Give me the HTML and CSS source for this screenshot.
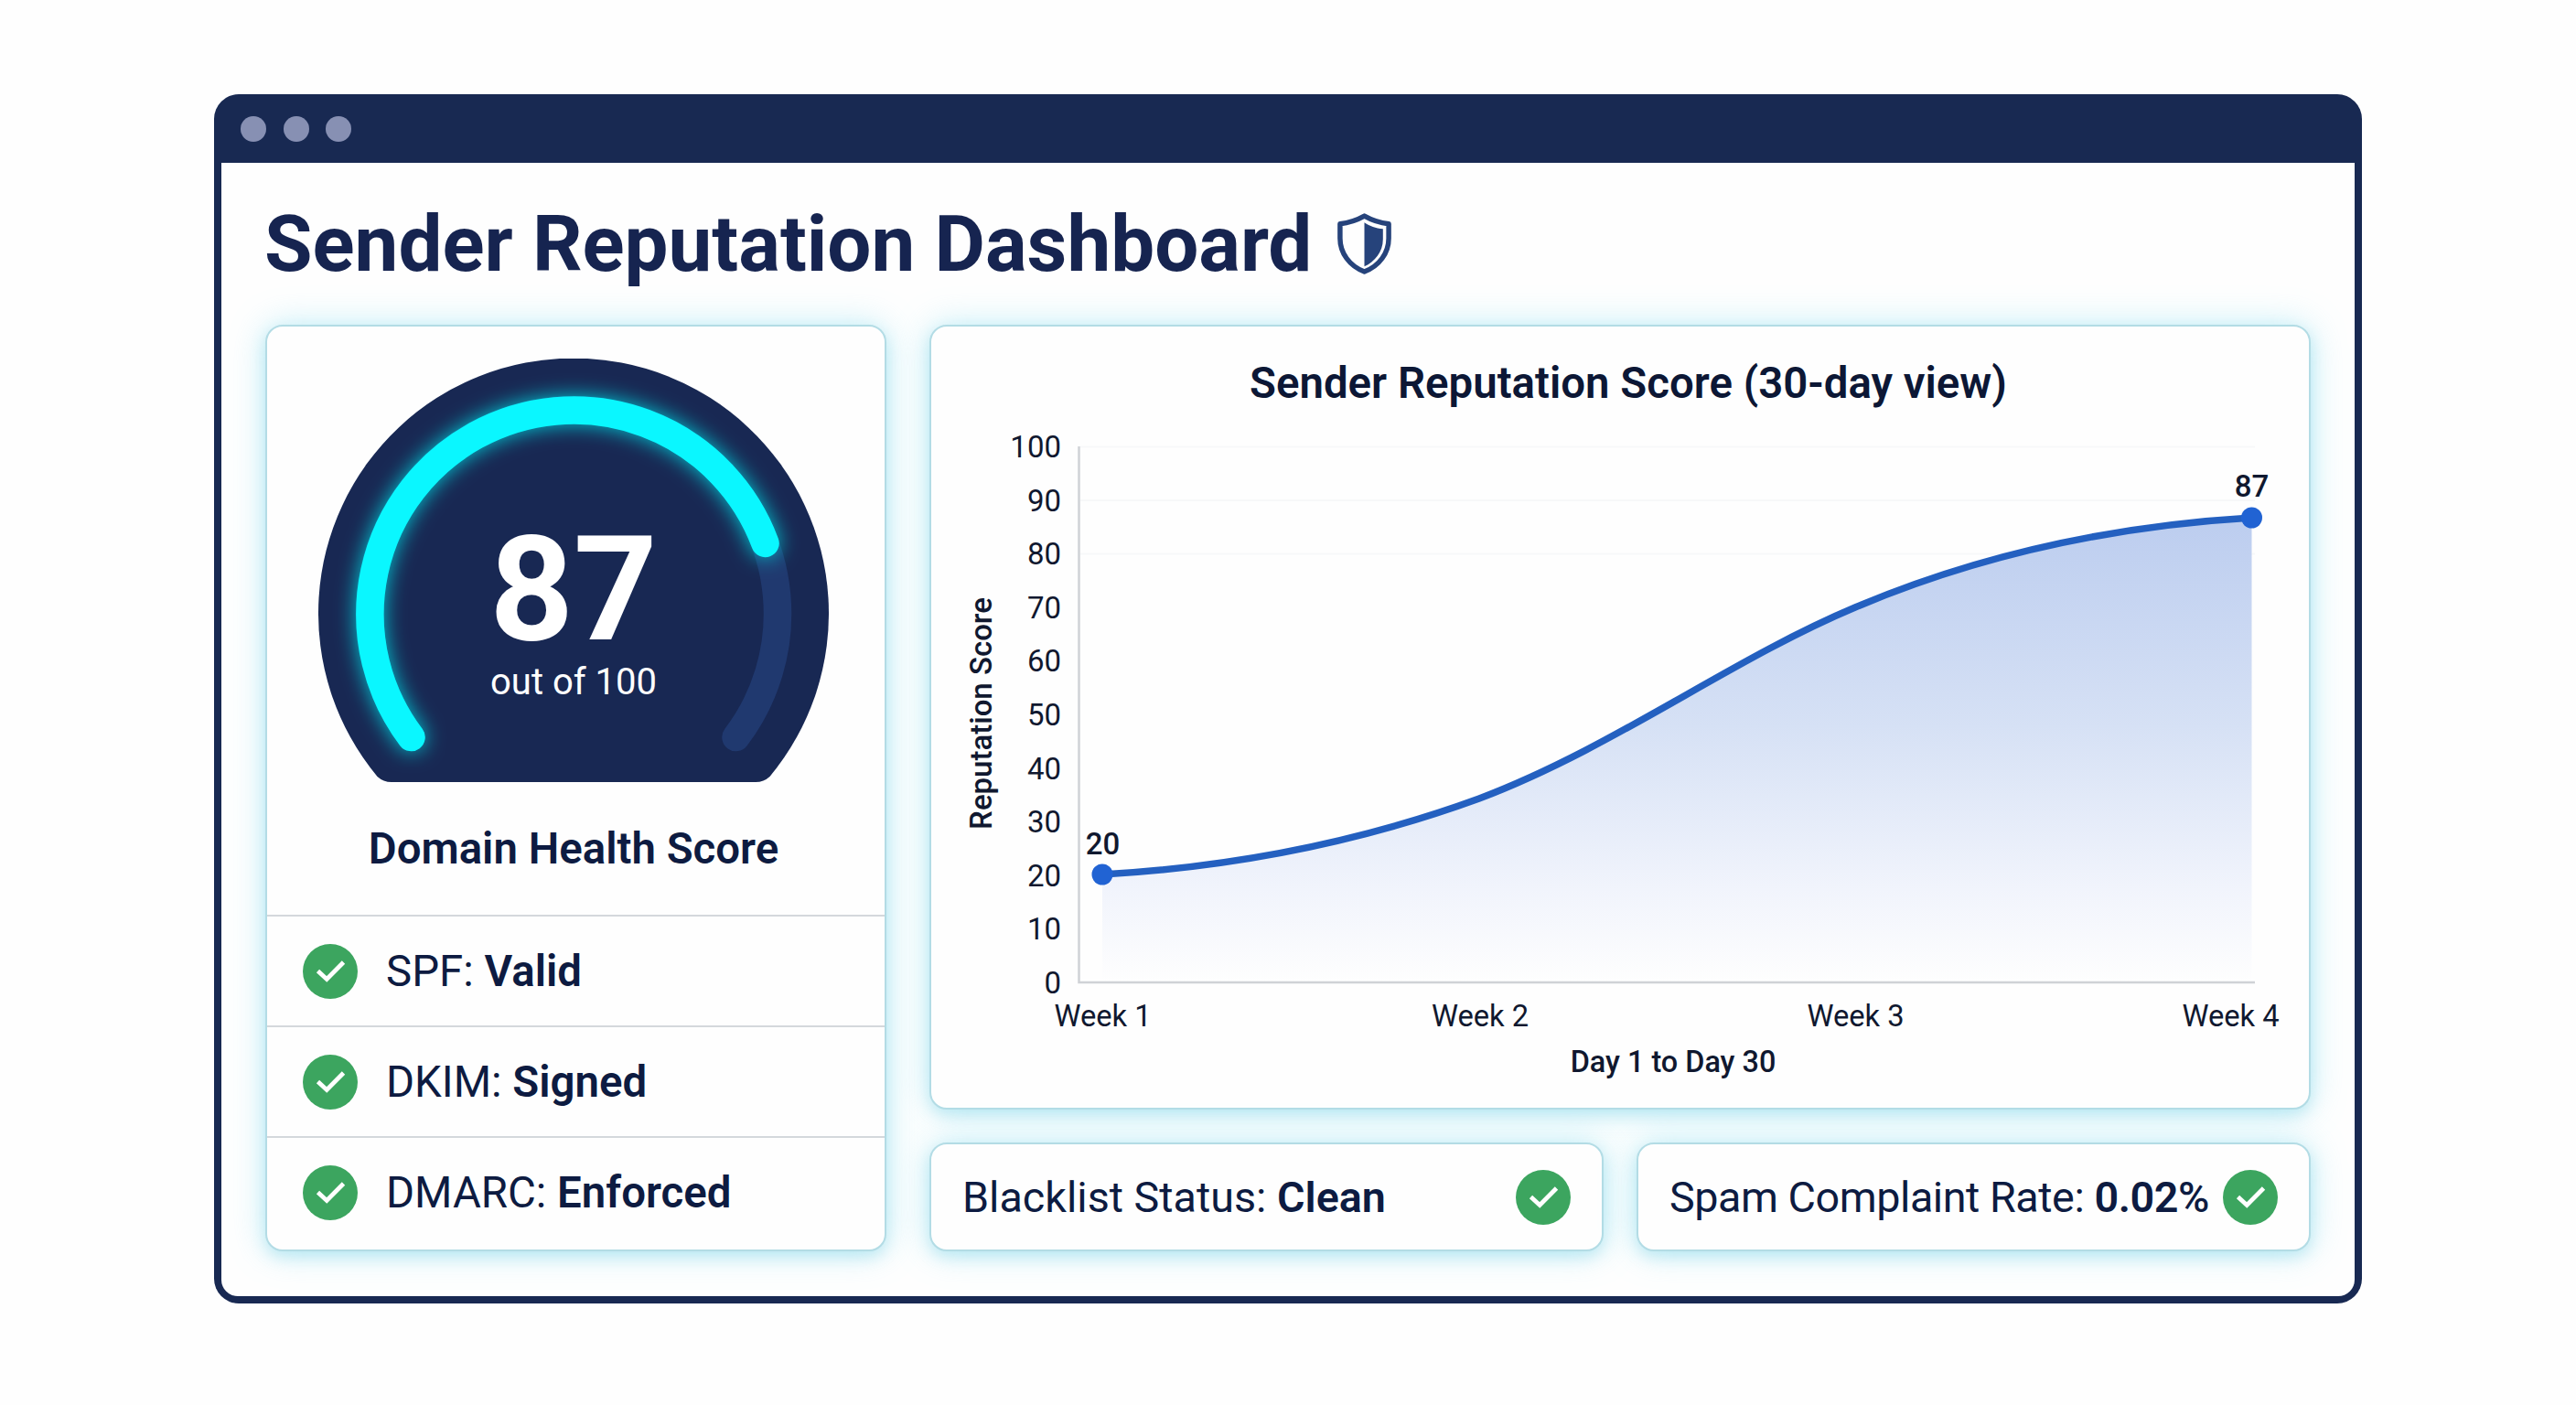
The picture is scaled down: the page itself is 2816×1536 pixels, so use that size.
FILE: index.html
```
<!DOCTYPE html>
<html lang="en">
<head>
    <meta charset="UTF-8">
    <title>Sender Reputation Dashboard</title>
    <link rel="stylesheet" href="styles.css">
</head>
<body>

<svg class="sprite" aria-hidden="true">
    <symbol id="check" viewBox="0 0 60 60">
        <circle cx="30" cy="30" r="30" fill="#3ca55f"/>
        <path d="M16.5 29.500 L26.200 38.500 L44.500 20" fill="none" stroke="#fff" stroke-width="4.800"/>
    </symbol>
</svg>

<div class="window">
    <div class="titlebar">
        <span class="dot"></span>
        <span class="dot"></span>
        <span class="dot"></span>
    </div>

    <div class="content">
        <div class="header">
            <h1 class="header-title">Sender Reputation Dashboard</h1>
            <svg class="shield" viewBox="0 0 58 66">
                <path d="M29 3 C21 7.500 12 10.500 2.800 11.500 V27 C2.800 43 13 57 29 63 C45 57 55.200 43 55.200 27 V11.500 C46 10.500 37 7.500 29 3 Z" fill="none" stroke="#26437b" stroke-width="5.400" stroke-linejoin="round"/>
                <path d="M29 10 C35 14 41 16 49 17 V28 C49 42 40 52 29 57.500 Z" fill="#26437b"/>
            </svg>
        </div>

        <div class="board">
            <div class="card health">
                <div class="health-top">
                    <svg class="gauge" viewBox="0 0 558 463">
                        <defs>
                            <filter id="glow" x="-20%" y="-20%" width="140%" height="140%">
                                <feGaussianBlur stdDeviation="11"/>
                            </filter>
                        </defs>
                        <path class="gauge-body" d="M64.500 457 A279 279 0 1 1 493.500 457 Q487 463 478 463 H80 Q71 463 64.500 457 Z"/>
                        <path class="gauge-track" d="M101.500 414 A223 223 0 1 1 456.500 414"/>
                        <path class="gauge-glow" filter="url(#glow)" d="M101.500 414 A223 223 0 1 1 488.500 202"/>
                        <path class="gauge-value" d="M101.500 414 A223 223 0 1 1 488.500 202"/>
                        <text class="gauge-number" x="279" y="307">87</text>
                        <text class="gauge-note" x="279" y="367">out of 100</text>
                    </svg>
                    <h2 class="health-title">Domain Health Score</h2>
                </div>
                <ul class="checks">
                    <li><svg class="check"><use href="#check"/></svg><span>SPF: <b>Valid</b></span></li>
                    <li><svg class="check"><use href="#check"/></svg><span>DKIM: <b>Signed</b></span></li>
                    <li><svg class="check"><use href="#check"/></svg><span>DMARC: <b>Enforced</b></span></li>
                </ul>
            </div>

            <div class="main">
                <div class="card chart-card">
                    <h2 class="chart-title">Sender Reputation Score (30-day view)</h2>
                    <svg class="chart" viewBox="1018 460 1506 750">
                        <defs>
                            <linearGradient id="area" x1="0" y1="566" x2="0" y2="1074" gradientUnits="userSpaceOnUse">
                                <stop offset="0" stop-color="#bccdef"/>
                                <stop offset="0.45" stop-color="#d6e1f5"/>
                                <stop offset="0.8" stop-color="#f1f4fc"/>
                                <stop offset="1" stop-color="#fefefe"/>
                            </linearGradient>
                        </defs>
                        <path class="grid" d="M1181 488.500 H2465 M1181 547 H2465 M1181 605.500 H2465"/>
                        <path fill="url(#area)" d="M1205 956 C1345 948 1480 923 1617 873 C1765 817 1890 722 2028 664 C2165 606 2310 575 2461.500 566 V1074 H1205 Z"/>
                        <path class="axis" d="M1179.500 488 V1074 H2465"/>
                        <path class="line" d="M1205 956 C1345 948 1480 923 1617 873 C1765 817 1890 722 2028 664 C2165 606 2310 575 2461.500 566"/>
                        <circle class="point" cx="1205" cy="956" r="11.500"/>
                        <circle class="point" cx="2461.500" cy="566" r="11.500"/>
                        <g class="ticks-y">
                            <text x="1160" y="500">100</text>
                            <text x="1160" y="558.500">90</text>
                            <text x="1160" y="617">80</text>
                            <text x="1160" y="675.500">70</text>
                            <text x="1160" y="734">60</text>
                            <text x="1160" y="793">50</text>
                            <text x="1160" y="851.500">40</text>
                            <text x="1160" y="910">30</text>
                            <text x="1160" y="968.500">20</text>
                            <text x="1160" y="1027">10</text>
                            <text x="1160" y="1086">0</text>
                        </g>
                        <g class="ticks-x">
                            <text x="1205.500" y="1122">Week 1</text>
                            <text x="1618" y="1122">Week 2</text>
                            <text x="2028.500" y="1122">Week 3</text>
                            <text x="2438.500" y="1122">Week 4</text>
                        </g>
                        <g class="labels">
                            <text x="1205.500" y="934">20</text>
                            <text x="2461.500" y="543">87</text>
                            <text class="range" x="1829" y="1171.500">Day 1 to Day 30</text>
                            <text transform="translate(1084 780) rotate(-90)">Reputation Score</text>
                        </g>
                    </svg>
                </div>

                <div class="stats">
                    <div class="card stat">
                        <span>Blacklist Status: <b>Clean</b></span>
                        <svg class="check"><use href="#check"/></svg>
                    </div>
                    <div class="card stat stat-tight">
                        <span>Spam Complaint Rate: <b>0.02</b><span class="percent">%</span></span>
                        <svg class="check"><use href="#check"/></svg>
                    </div>
                </div>
            </div>
        </div>
    </div>
</div>

</body>
</html>
```
FILE: styles.css
```
* {
    box-sizing: border-box;
    margin: 0;
    padding: 0;
}

body {
    background-color: #fefefe;
    font-family: Roboto, sans-serif;
    color: #0d1b41;
    height: 1536px;
    padding: 103px 234px 111px;
}

.sprite {
    display: block;
    width: 0;
    height: 0;
}

.window {
    height: 1322px;
    display: flex;
    flex-direction: column;
    padding: 0 8px 8px;
    background: #182952;
    border-radius: 27px;
}

.titlebar {
    flex: none;
    height: 75px;
    padding-left: 21px;
    display: flex;
    align-items: center;
    gap: 18.500px;
}

.dot {
    width: 28px;
    height: 28px;
    border-radius: 50%;
    background: #8790b3;
}

.content {
    flex: 1;
    display: flex;
    flex-direction: column;
    padding: 0 48px 49px;
    background: #fefefe;
    border-radius: 0 0 18px 18px;
}

.header {
    flex: none;
    height: 177px;
    display: flex;
    align-items: center;
    gap: 28px;
}

.header-title {
    margin-left: -1px;
    font-size: 85.300px;
    font-weight: 700;
    line-height: 100px;
    color: #162450;
}

.shield {
    width: 59px;
    height: 67px;
}

.board {
    flex: 1;
    display: flex;
    gap: 47px;
}

.card {
    background: #fefefe;
    border: 2px solid #b3dce5;
    border-radius: 19px;
    box-shadow: 0 0 38px rgba(110, 218, 240, 0.4), 0 6px 16px rgba(90, 195, 220, 0.28);
}

.health {
    width: 679px;
    display: flex;
    flex-direction: column;
}

.health-top {
    height: 643px;
    display: flex;
    flex-direction: column;
    align-items: center;
    padding: 35px 5px 0 0;
}

.gauge {
    width: 558px;
    height: 463px;
}

.gauge-body {
    fill: #182853;
}

.gauge-track,
.gauge-value,
.gauge-glow {
    fill: none;
    stroke-width: 30.500px;
    stroke-linecap: round;
}

.gauge-track {
    stroke: #20396f;
}

.gauge-value {
    stroke: #0af7ff;
}

.gauge-glow {
    stroke: #0cc9d6;
}

.gauge-number,
.gauge-note {
    fill: #fff;
    text-anchor: middle;
}

.gauge-number {
    font-size: 160px;
    font-weight: 700;
}

.gauge-note {
    font-size: 40px;
}

.health-title,
.chart-title {
    font-size: 47.400px;
    font-weight: 600;
    line-height: 56px;
}

.health-title {
    margin-top: 45px;
}

.checks {
    flex: 1;
    display: flex;
    flex-direction: column;
    list-style: none;
}

.checks li {
    height: 121px;
    display: flex;
    align-items: center;
    gap: 31px;
    padding-left: 39px;
    border-top: 2px solid #d4d8dc;
    font-size: 47.400px;
}

b {
    font-weight: 600;
}

.check {
    flex: none;
    width: 60px;
    height: 60px;
}

.main {
    flex: 1;
    display: flex;
    flex-direction: column;
    gap: 36px;
}

.chart-card {
    height: 858px;
    display: flex;
    flex-direction: column;
}

.chart-title {
    height: 103px;
    padding: 34px 0 0 18px;
    text-align: center;
    color: #0c1735;
}

.chart {
    width: 1506px;
    height: 750px;
}

.chart text {
    font-size: 33px;
    fill: #10182f;
}

.chart .ticks-x text {
    font-size: 32.700px;
}

.chart .range {
    font-size: 32.400px;
}

.grid {
    stroke: #f7f8f9;
    stroke-width: 2;
}

.axis {
    fill: none;
    stroke: #cfd2d6;
    stroke-width: 2.500;
}

.line {
    fill: none;
    stroke: #2460c0;
    stroke-width: 7.500;
}

.point {
    fill: #2163d3;
}

.ticks-y {
    text-anchor: end;
}

.ticks-x,
.labels {
    text-anchor: middle;
}

.labels {
    font-weight: 500;
}

.stats {
    flex: 1;
    display: flex;
    gap: 36px;
}

.stat {
    flex: 1 1 0;
    min-width: 0;
    display: flex;
    align-items: center;
    justify-content: space-between;
    padding: 0 34px;
    font-size: 46.700px;
    white-space: nowrap;
}

.stat-tight {
    letter-spacing: -0.450px;
}

.percent {
    font-weight: 500;
}
```
